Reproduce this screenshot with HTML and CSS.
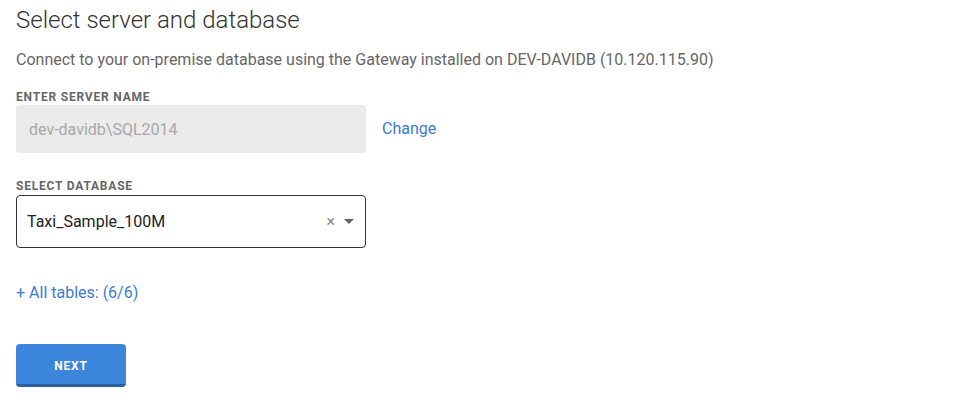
FILE: index.html
```html
<!DOCTYPE html>
<html>
<head>
<meta charset="utf-8">
<link rel="stylesheet" href="styles.css">
</head>
<body>
<div class="page">
  <h1 class="title">Select server and database</h1>
  <p class="subtitle">Connect to your on-premise database using the Gateway installed on DEV-DAVIDB (10.120.115.90)</p>

  <div class="field">
    <div class="label">ENTER SERVER NAME</div>
    <div class="row">
      <div class="input disabled">dev-davidb\SQL2014</div>
      <a class="link change">Change</a>
    </div>
  </div>

  <div class="field field2">
    <div class="label label2">SELECT DATABASE</div>
    <div class="select">
      <span class="value">Taxi_Sample_100M</span>
      <span class="clear">×</span>
      <span class="caret"></span>
    </div>
  </div>

  <a class="link tables">+ All tables: (6/6)</a>

  <button class="btn">NEXT</button>
</div>
</body>
</html>
```
FILE: styles.css
```css
html, body { margin: 0; padding: 0; background: #fff; }
body { font-family: Roboto, "Noto Sans", sans-serif; color: #333; }
.page { padding: 6px 16px 0 16px; display: flex; flex-direction: column; align-items: flex-start; }
.title { margin: 0; font-size: 24px; font-weight: 300; color: #333; line-height: 28px; }
.subtitle { margin: 16px 0 0 0; font-size: 16px; color: #666; line-height: 20px; }
.field { margin-top: 20px; display: flex; flex-direction: column; }
.field2 { margin-top: 26px; }
.label { font-size: 12px; font-weight: 700; letter-spacing: 0.8px; color: #666; line-height: 14px; margin-bottom: 1px; }
.label2 { margin-bottom: 2px; }
.row { display: flex; align-items: center; }
.input { box-sizing: border-box; width: 350px; height: 48px; border-radius: 4px; padding: 0 13px; display: flex; align-items: center; font-size: 16px; }
.disabled { background: #ebebeb; color: #a8a8a8; }
.link { color: #3b7bd0; cursor: pointer; }
.change { margin-left: 16px; font-size: 16px; margin-top: -2px; }
.select { box-sizing: border-box; width: 350px; height: 53px; border: 1px solid #333; border-radius: 4px; padding: 0 10px; display: flex; align-items: center; font-size: 16px; color: #222; }
.value { flex: 1; }
.clear { color: #888; font-size: 16px; margin-right: 9px; }
.caret { width: 0; height: 0; border-left: 5px solid transparent; border-right: 5px solid transparent; border-top: 5px solid #666; margin-right: 1px; }
.tables { margin-top: 35px; font-size: 16px; line-height: 20px; }
.btn { margin-top: 41px; width: 110px; height: 43px; border: 0; border-bottom: 3px solid #2b5f9e; border-radius: 4px; background: #3b86dc; color: #fff; font-family: Roboto, sans-serif; font-weight: 700; font-size: 12px; letter-spacing: 0.8px; padding: 3px 0 0 0; }
```
